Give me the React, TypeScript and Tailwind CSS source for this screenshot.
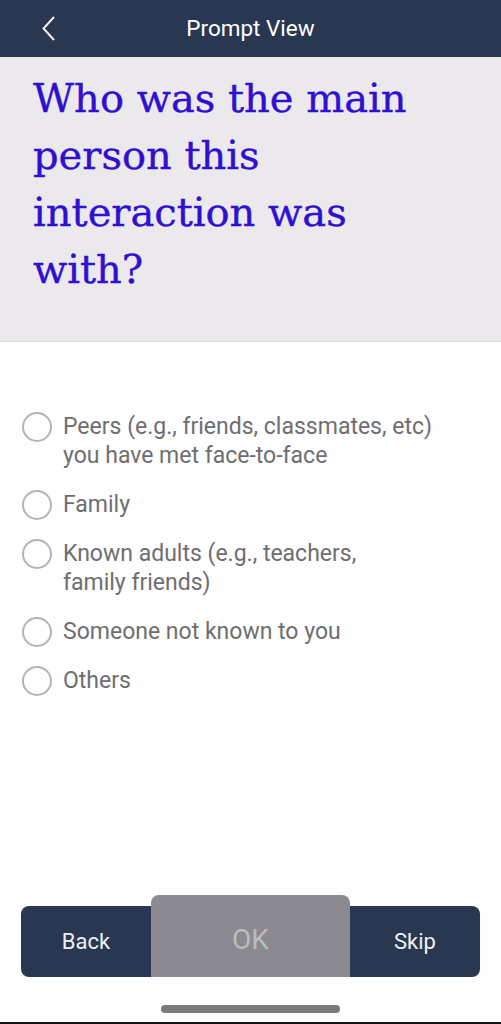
import React from 'react';

const options: string[][] = [
  ['Peers (e.g., friends, classmates, etc)', 'you have met face-to-face'],
  ['Family'],
  ['Known adults (e.g., teachers,', 'family friends)'],
  ['Someone not known to you'],
  ['Others'],
];

const Radio = () => (
  <div className="h-[30px] w-[30px] shrink-0 rounded-full border-2 border-[#b4b4b6]" />
);

const App = () => {
  return (
    <div className="flex h-[1024px] w-[501px] flex-col bg-[#fefefe] font-['Roboto',sans-serif]">
      {/* header */}
      <div className="relative flex h-[57px] shrink-0 items-center justify-center bg-[#293850]">
        <svg
          className="absolute left-[42px] top-[16px]"
          width="13"
          height="25"
          viewBox="0 0 13 25"
          fill="none"
        >
          <path d="M12 1 L1.5 12.5 L12 24" stroke="#eef0f4" strokeWidth="2" />
        </svg>
        <div className="text-[22.5px] text-white">Prompt View</div>
      </div>

      {/* question */}
      <div className="h-[285px] shrink-0 border-b border-[#dcdadf] bg-[#ebe9ec] px-[33px] pt-[13px]">
        <div className="font-['DejaVu_Serif',serif] text-[40px] leading-[57px] text-[#3010d0] [-webkit-text-stroke:0.4px_#3010d0]">
          Who was the main
          <br />
          person this
          <br />
          interaction was
          <br />
          with?
        </div>
      </div>

      {/* options */}
      <div className="flex flex-1 flex-col gap-[19.5px] px-[22px] pt-[70px]">
        {options.map((lines, i) => (
          <div className="flex items-start gap-[11px]" key={i}>
            <Radio />
            <div className="text-[23px] leading-[29px] text-[#6e6e70]">
              {lines.map((l, j) => (
                <div key={j}>{l}</div>
              ))}
            </div>
          </div>
        ))}
      </div>

      {/* buttons */}
      <div className="flex items-end px-[21px]">
        <div className="flex h-[71px] flex-1 items-center justify-center rounded-l-lg bg-[#293850] text-[22px] text-[#eef0f5]">
          Back
        </div>
        <div className="flex h-[82px] w-[199px] items-center justify-center rounded-t-lg bg-[#8b8a91] pt-[8px] text-[28px] text-[#bcbbc0]">
          OK
        </div>
        <div className="flex h-[71px] flex-1 items-center justify-center rounded-r-lg bg-[#293850] text-[22px] text-[#eef0f5]">
          Skip
        </div>
      </div>

      {/* home indicator */}
      <div className="flex justify-center pb-[9px] pt-[28px]">
        <div className="h-[8px] w-[179px] rounded-full bg-[#79797b]" />
      </div>
      <div className="h-[2px] bg-[#111]" />
    </div>
  );
};

export default App;
